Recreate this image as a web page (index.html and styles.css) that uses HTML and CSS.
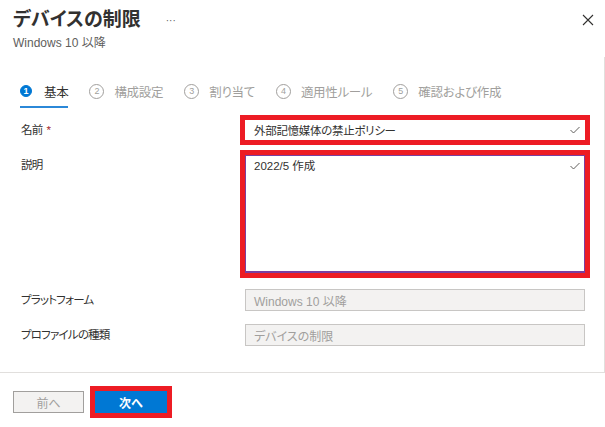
FILE: index.html
```html
<!DOCTYPE html>
<html lang="ja">
<head>
    <meta charset="UTF-8">
    <meta name="viewport" content="width=device-width, initial-scale=1.0">
    <title>デバイスの制限</title>
    <link rel="stylesheet" href="styles.css">
</head>
<body>
    <div class="panel">
        <!-- ヘッダー -->
        <header class="head">
            <div class="title-row">
                <h1 class="title">デバイスの制限</h1>
                <span class="more">···</span>
                <button class="close" aria-label="閉じる">
                    <svg width="12" height="12" viewBox="0 0 12 12"><path d="M1 1 L11 11 M11 1 L1 11" stroke="#323130" stroke-width="1.1" fill="none"/></svg>
                </button>
            </div>
            <div class="sub">Windows 10 以降</div>
        </header>

        <main class="content">
            <!-- ステップ -->
            <nav class="steps">
                <div class="step active"><span class="num">1</span>基本</div>
                <div class="step"><span class="num">2</span>構成設定</div>
                <div class="step"><span class="num">3</span>割り当て</div>
                <div class="step"><span class="num">4</span>適用性ルール</div>
                <div class="step"><span class="num">5</span>確認および作成</div>
            </nav>

            <!-- 基本情報フォーム -->
            <div class="form">
                <div class="row row-name">
                    <label class="label">名前<span class="req">*</span></label>
                    <div class="field marked">
                        <span>外部記憶媒体の禁止ポリシー</span>
                        <svg class="check" width="10" height="8" viewBox="0 0 10 8"><path d="M0.5 4 L3.5 7 L9.5 1" stroke="#605e5c" stroke-width="1" fill="none"/></svg>
                    </div>
                </div>
                <div class="row row-desc">
                    <label class="label">説明</label>
                    <div class="field area marked">
                        <span>2022/5 作成</span>
                        <svg class="check" width="10" height="8" viewBox="0 0 10 8"><path d="M0.5 4 L3.5 7 L9.5 1" stroke="#605e5c" stroke-width="1" fill="none"/></svg>
                    </div>
                </div>
                <div class="row row-platform">
                    <label class="label">プラットフォーム</label>
                    <div class="field disabled">Windows 10 以降</div>
                </div>
                <div class="row row-type">
                    <label class="label">プロファイルの種類</label>
                    <div class="field disabled">デバイスの制限</div>
                </div>
            </div>
        </main>

        <footer class="foot">
            <button class="btn btn-prev">前へ</button>
            <button class="btn btn-next">次へ</button>
        </footer>
    </div>
</body>
</html>
```

FILE: styles.css
```css
body {
    margin: 0;
    font-family: "Liberation Sans", "Noto Sans CJK JP", sans-serif;
    font-feature-settings: "palt";
    color: #323130;
    background-color: #fff;
}

.panel {
    width: 605px;
    height: 427px;
}

.head {
    height: 57px;
    padding: 6px 11px 0 13px;
    box-sizing: border-box;
}

.title-row {
    display: flex;
    align-items: center;
    height: 28px;
}

.title {
    margin: 0;
    font-size: 19px;
    font-weight: 700;
    line-height: 28px;
}

.more {
    margin-left: 25px;
    color: #605e5c;
    font-size: 10px;
}

.close {
    margin-left: auto;
    padding: 0;
    width: 12px;
    height: 12px;
    border: none;
    background: none;
    display: flex;
}

.sub {
    font-size: 12px;
    line-height: 16px;
    color: #605e5c;
    margin-top: 1px;
}

.content {
    height: 316px;
    box-sizing: border-box;
    border-right: 1px solid #e1dfdd;
    border-bottom: 1px solid #e1dfdd;
    padding: 19px 0 0 20px;
}

.steps {
    display: flex;
    gap: 21px;
}

.step {
    display: flex;
    align-items: center;
    gap: 10px;
    height: 30px;
    border-bottom: 2px solid transparent;
    font-size: 12.5px;
    letter-spacing: -0.3px;
    color: #a19f9d;
}

.step.active {
    gap: 12px;
    color: #323130;
    border-bottom-color: #2b88d8;
}

.num {
    width: 15px;
    height: 15px;
    box-sizing: border-box;
    border: 1px solid #a19f9d;
    border-radius: 50%;
    font-size: 9px;
    letter-spacing: 0;
    display: flex;
    align-items: center;
    justify-content: center;
}

.step.active .num {
    width: 12px;
    height: 12px;
    background-color: #0078d4;
    border-color: #0078d4;
    color: #fff;
    font-weight: 700;
}

.form {
    margin-top: 12px;
    padding-left: 1px;
}

.row {
    display: grid;
    grid-template-columns: 224px 340px;
    align-items: center;
    font-size: 11.5px;
}

.row-desc {
    margin-top: 15px;
    align-items: start;
}

.row-platform {
    margin-top: 16px;
}

.row-type {
    margin-top: 13px;
}

.label {
    line-height: 20px;
    letter-spacing: -0.8px;
}

.req {
    color: #a4262c;
    margin-left: 4px;
}

.field {
    display: flex;
    align-items: center;
    justify-content: space-between;
    box-sizing: border-box;
    height: 20px;
    padding: 0 5px 0 9px;
    background-color: #fff;
    letter-spacing: -0.3px;
}

.marked {
    outline: 5px solid #ed1c24;
}

.area {
    height: 118px;
    align-items: flex-start;
    border: 1px solid #7a3fa0;
    border-bottom-width: 2px;
    padding: 2px 4px 0 8px;
    line-height: 16px;
    letter-spacing: 0;
}

.area .check {
    margin-top: 4px;
}

.disabled {
    height: 22px;
    justify-content: flex-start;
    background-color: #f3f2f1;
    border: 1px solid #c8c6c4;
    color: #a19f9d;
    padding-left: 8px;
    font-size: 12px;
    letter-spacing: 0;
}

.foot {
    display: flex;
    gap: 11px;
    padding: 18px 0 0 13px;
}

.btn {
    width: 71px;
    height: 22px;
    box-sizing: border-box;
    font-family: inherit;
    font-size: 12px;
    padding: 0;
}

.btn-prev {
    background-color: #f3f2f1;
    border: 1px solid #a19f9d;
    color: #a19f9d;
}

.btn-next {
    width: 72px;
    background-color: #0078d4;
    border: none;
    color: #fff;
    font-weight: 700;
    outline: 5px solid #ed1c24;
}
```
